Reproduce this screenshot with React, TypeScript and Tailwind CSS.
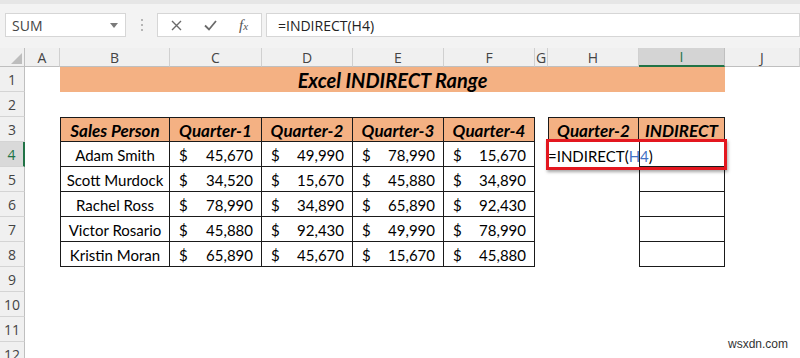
import React from "react"

const grid = "grid grid-cols-[25px_35px_110px_92px_91px_91px_91px_13px_91px_86px_75px]"
const cellFont = "font-['Lato',sans-serif]"
const uiFont = "font-['Open_Sans',sans-serif]"

const letters = ["A", "B", "C", "D", "E", "F", "G", "H", "I", "J"]

const data: [string, number[]][] = [
  ["Adam Smith", [45670, 49990, 78990, 15670]],
  ["Scott Murdock", [34520, 15670, 45880, 34890]],
  ["Rachel Ross", [78990, 34890, 65890, 92430]],
  ["Victor Rosario", [45880, 92430, 49990, 78990]],
  ["Kristin Moran", [65890, 45670, 15670, 45880]],
]

function RowHead({ n, active }: { n: number; active?: boolean }) {
  return (
    <div
      className={
        active
          ? `h-[25px] flex items-center justify-center bg-[#d9d9d9] border-r-2 border-r-[#217346] border-b border-b-[#d4d4d4] text-[14px] text-[#217346] ${uiFont}`
          : `h-[25px] flex items-center justify-center bg-[#f0f0f0] border-r border-r-[#bfbfbf] border-b border-b-[#d4d4d4] text-[14px] text-[#444] ${uiFont}`
      }
    >
      {n}
    </div>
  )
}

function Toolbar() {
  return (
    <div className="h-[48px] bg-[#f3f3f3] border-t-4 border-t-[#e6e6e6] flex items-start pt-[9px] pl-[5px]">
      <div className={`w-[121px] h-[24px] bg-white border border-[#d6d6d6] flex items-center justify-between pl-[6px] pr-[7px] text-[14px] text-[#444] ${uiFont}`}>
        <span>SUM</span>
        <svg width="8" height="5" viewBox="0 0 8 5">
          <path d="M0 0 L8 0 L4 5 Z" fill="#7a7a7a" />
        </svg>
      </div>
      <div className="w-[31px] h-[24px] flex flex-col items-center justify-center gap-[3px]">
        <div className="w-[2px] h-[2px] bg-[#b5b5b5]" />
        <div className="w-[2px] h-[2px] bg-[#b5b5b5]" />
        <div className="w-[2px] h-[2px] bg-[#b5b5b5]" />
      </div>
      <div className="w-[105px] h-[24px] bg-white border border-[#d6d6d6] flex items-center">
        <div className="w-[36px] flex justify-center">
          <svg width="11" height="11" viewBox="0 0 11 11">
            <path d="M1 1 L10 10 M10 1 L1 10" stroke="#6a6a6a" strokeWidth="1.4" />
          </svg>
        </div>
        <div className="w-[32px] flex justify-center">
          <svg width="13" height="11" viewBox="0 0 13 11">
            <path d="M1 5.5 L5 9.5 L12 1" stroke="#6a6a6a" strokeWidth="1.8" fill="none" />
          </svg>
        </div>
        <div className="flex-1 flex justify-center text-[#555] italic font-['Liberation_Serif',serif] text-[15px] leading-none">
          f<span className="text-[11px] pt-[3px]">x</span>
        </div>
      </div>
      <div className={`ml-[4px] flex-1 h-[24px] bg-white border border-[#d6d6d6] flex items-center pl-[11px] text-[14px] text-[#222] ${uiFont}`}>
        =INDIRECT(H4)
      </div>
    </div>
  )
}

function fmt(v: number) {
  return v.toLocaleString("en-US")
}

export default function App() {
  const tblHead = `h-[25px] bg-[#f4b183] border-r border-b border-t border-[#1a1a1a] flex items-center justify-center pt-[2px] font-bold italic text-[17px] text-black ${cellFont}`
  const tblCell = `h-[25px] border-r border-b border-[#1a1a1a] text-[15px] text-black ${cellFont}`

  return (
    <div className="w-[800px] h-[358px] overflow-hidden bg-white relative">
      <Toolbar />
      <div className={`${grid} grid-rows-[19px]`}>
        <div className="h-[19px] bg-[#f0f0f0] border-r border-r-[#bfbfbf] border-b border-b-[#bfbfbf] flex items-end justify-end pr-[2px] pb-[2px]">
          <svg width="11" height="11" viewBox="0 0 11 11">
            <path d="M11 0 L11 11 L0 11 Z" fill="#bdbdbd" />
          </svg>
        </div>
        {letters.map((l) => (
          <div
            key={l}
            className={
              l === "I"
                ? `h-[19px] flex items-center justify-center bg-[#d4d4d4] border-r border-r-[#bfbfbf] border-b-2 border-b-[#217346] text-[14px] text-[#217346] ${uiFont}`
                : `h-[19px] flex items-center justify-center bg-[#f0f0f0] border-r border-r-[#d0d0d0] border-b border-b-[#bfbfbf] text-[14px] text-[#444] ${uiFont}`
            }
          >
            {l}
          </div>
        ))}

        {/* row 1 */}
        <RowHead n={1} />
        <div />
        <div className={`col-span-8 h-[25px] bg-[#f4b183] flex items-center justify-center pt-[1px] font-bold italic text-[20px] text-black ${cellFont}`}>
          Excel INDIRECT Range
        </div>
        <div />

        {/* row 2 */}
        <RowHead n={2} />
        <div className="col-span-10" />

        {/* row 3 */}
        <RowHead n={3} />
        <div />
        <div className={`${tblHead} border-l`}>Sales Person</div>
        {["Quarter-1", "Quarter-2", "Quarter-3", "Quarter-4"].map((q) => (
          <div key={q} className={tblHead}>
            {q}
          </div>
        ))}
        <div />
        <div className={`${tblHead} border-l`}>Quarter-2</div>
        <div className={tblHead}>INDIRECT</div>
        <div />

        {/* rows 4-8 */}
        {data.map(([name, vals], i) => (
          <React.Fragment key={name}>
            <RowHead n={i + 4} active={i === 0} />
            <div />
            <div className={`${tblCell} border-l flex items-center justify-center pt-[3px]`}>{name}</div>
            {vals.map((v, j) => (
              <div key={j} className={`${tblCell} flex items-center justify-between pl-[9px] pr-[8px] pt-[3px]`}>
                <span>$</span>
                <span>{fmt(v)}</span>
              </div>
            ))}
            <div />
            {i === 0 ? (
              <div className={`h-[25px] relative whitespace-nowrap overflow-visible z-10 flex items-center pt-[3px] text-[15px] text-black ${cellFont}`}>
                =INDIRECT(<span className="text-[#4472c4]">H4</span>)
              </div>
            ) : (
              <div />
            )}
            <div className={`${tblCell} border-l`} />
            <div />
          </React.Fragment>
        ))}

        {[9, 10, 11, 12].map((n) => (
          <React.Fragment key={n}>
            <RowHead n={n} />
            <div className="col-span-10" />
          </React.Fragment>
        ))}
      </div>

      {/* selection highlight around H4:I4 */}
      <div className="absolute left-[546px] top-[139px] w-[181px] h-[31px] border-[3px] border-[#e3171f] shadow-[1px_2px_3px_rgba(0,0,0,0.35)] z-20" />

      <div className="absolute right-[12px] bottom-[5px] text-[12px] text-[#333] font-['Liberation_Sans',sans-serif]">
        wsxdn.com
      </div>
    </div>
  )
}
